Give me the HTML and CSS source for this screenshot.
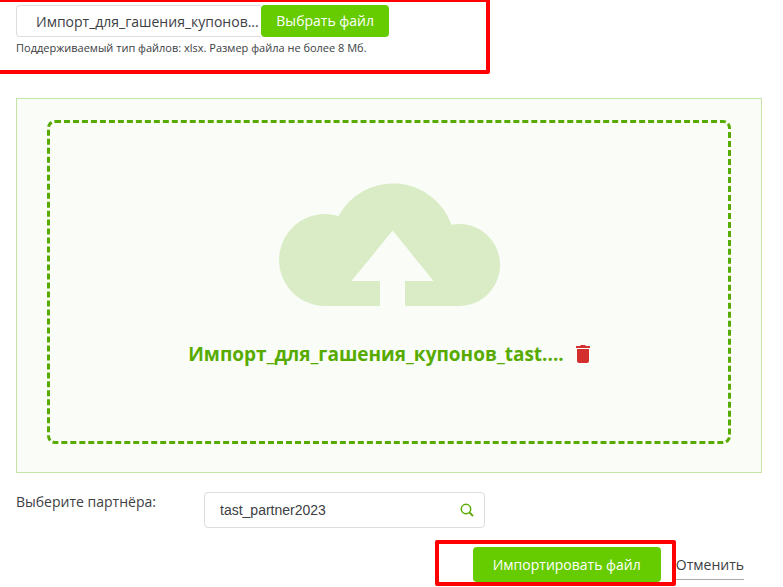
FILE: index.html
```html
<!DOCTYPE html>
<html lang="ru">

<head>
    <meta charset="UTF-8">
    <meta name="viewport" content="width=device-width, initial-scale=1.0">
    <title>Импорт файла</title>
    <link rel="stylesheet" href="styles.css">
</head>

<body>
    <form class="import-form">
        <section class="picker">
            <div class="file-field">
                <input type="text" class="file-name" value="Импорт_для_гашения_купонов..." aria-label="Имя файла" readonly>
                <button type="button" class="btn">Выбрать файл</button>
            </div>
            <p class="hint">Поддерживаемый тип файлов: xlsx. Размер файла не более 8 Мб.</p>
            <div class="mark mark-picker"></div>
        </section>

        <section class="upload">
            <div class="drop-zone">
                <svg class="cloud" viewBox="0 0 221 123" aria-hidden="true">
                    <path d="M46 123A46 46 0 1 1 59.500 33A62 62 0 0 1 172.500 41.700A41 41 0 1 1 180 123H126V98H154.500L113.700 47.500L72.500 98H101V123Z" fill="#d9ecc6"/>
                </svg>
                <div class="uploaded">
                    <span class="uploaded-name">Импорт_для_гашения_купонов_tast....</span>
                    <button type="button" class="delete" aria-label="Удалить файл">
                        <svg viewBox="0 0 14 18" aria-hidden="true">
                            <path d="M0 1H4L5 0H9L10 1H14V3H0ZM1 4H13V16Q13 18 11 18H3Q1 18 1 16Z" fill="#d32f2f"/>
                        </svg>
                    </button>
                </div>
            </div>
        </section>

        <div class="partner">
            <label for="partner">Выберите партнёра:</label>
            <div class="search">
                <input type="text" id="partner" value="tast_partner2023">
                <svg viewBox="0 0 14 14" aria-hidden="true">
                    <circle cx="6" cy="6" r="4.700" fill="none" stroke="#57ab00" stroke-width="1.500"/>
                    <path d="M9.300 9.300L13 13" stroke="#57ab00" stroke-width="1.800"/>
                </svg>
            </div>
        </div>

        <div class="actions">
            <div class="submit">
                <button type="submit" class="btn">Импортировать файл</button>
                <div class="mark mark-submit"></div>
            </div>
            <a href="#" class="cancel">Отменить</a>
        </div>
    </form>
</body>

</html>
```
FILE: styles.css
```css
* {
    box-sizing: border-box;
}

body {
    margin: 0;
    background: #fff;
    color: #3c4043;
    font-family: "Open Sans", "Noto Sans", sans-serif;
    font-size: 14px;
    line-height: 20px;
}

.import-form {
    padding: 5px 21px 5px 16px;
}

button {
    border: none;
    cursor: pointer;
    font-family: inherit;
}

.btn {
    flex: none;
    padding: 6px 15px;
    border-radius: 4px;
    background: #6c0;
    color: #fff;
    font-size: 14px;
    line-height: 20px;
}

.picker {
    position: relative;
}

.file-field {
    display: flex;
    width: 50%;
    max-width: 375px;
}

.file-name {
    flex: 1;
    min-width: 0;
    padding: 0 0 0 19px;
    border: 1px solid #ddd;
    border-right: none;
    border-radius: 4px 0 0 4px;
    color: inherit;
    font-family: inherit;
    font-size: 14px;
}

.hint {
    margin: 2px 0 0;
    font-size: 11px;
    line-height: 18px;
}

/* red outlines around the steps */
.mark {
    position: absolute;
    border: 4px solid #f00;
    border-radius: 2px;
    pointer-events: none;
}

.mark-picker {
    top: -7px;
    left: -24px;
    width: 498px;
    height: 76px;
}

.mark-submit {
    top: -7px;
    right: -15px;
    bottom: -4px;
    left: -38px;
}

.upload {
    margin-top: 41px;
    padding: 21px 30px 28px;
    border: 1px solid #c5e3a5;
    background: #fafdf7;
}

.drop-zone {
    display: flex;
    flex-direction: column;
    align-items: center;
    padding: 60px 20px 72px;
    border: 3px dashed #57ab00;
    border-radius: 8px;
}

.cloud {
    width: 221px;
    height: 123px;
}

.uploaded {
    display: flex;
    align-items: center;
    gap: 12px;
    margin-top: 33px;
}

.uploaded-name {
    color: #57ab00;
    font-size: 19px;
    font-weight: 700;
    line-height: 30px;
}

.delete {
    padding: 0;
    background: none;
}

.delete svg {
    display: block;
    width: 14px;
    height: 18px;
}

.partner {
    display: flex;
    margin-top: 19px;
}

.partner label {
    width: 188px;
}

.search {
    display: flex;
    align-items: center;
    width: 281px;
    height: 36px;
    padding: 0 10px 0 15px;
    border: 1px solid #ddd;
    border-radius: 4px;
}

.search input {
    flex: 1;
    min-width: 0;
    padding: 0;
    border: none;
    outline: none;
    color: inherit;
    font-family: "Liberation Sans", Arial, sans-serif;
    font-size: 14px;
}

.search svg {
    width: 14px;
    height: 14px;
}

.actions {
    display: flex;
    justify-content: flex-end;
    gap: 15px;
    margin-top: 19px;
    padding-right: 18px;
}

.submit {
    position: relative;
}

.submit .btn {
    height: 35px;
    padding: 0 20px;
}

.cancel {
    align-self: flex-end;
    padding-bottom: 4px;
    margin-bottom: 2px;
    border-bottom: 1px solid #aaa;
    color: inherit;
    text-decoration: none;
}
```
